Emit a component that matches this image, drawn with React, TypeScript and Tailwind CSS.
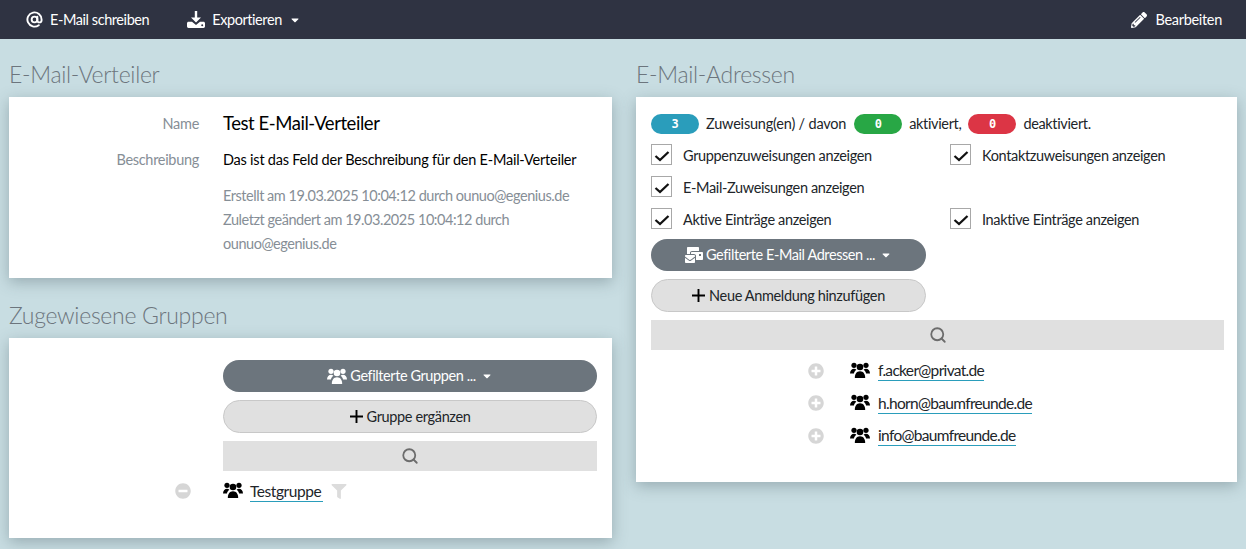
import React from 'react';
import { AtSign, Search } from 'lucide-react';
import { FaPencilAlt, FaFilter, FaPlusCircle, FaMinusCircle, FaMailBulk, FaCaretDown } from 'react-icons/fa';

const font = "font-['Lato','Liberation_Sans',sans-serif]";

const UsersIcon = ({ className }: { className: string }) => (
  <svg viewBox="0 0 20 16" className={className} fill="currentColor">
    <circle cx="4" cy="3.3" r="2.6" />
    <circle cx="16" cy="3.3" r="2.6" />
    <circle cx="10" cy="5" r="3.3" />
    <path d="M0 11.5C0 8.5 2 6.8 4 6.8c1 0 1.8.3 2.4.9C5 8.8 4.2 10 3.9 11.5Z" />
    <path d="M20 11.5C20 8.5 18 6.8 16 6.8c-1 0-1.8.3-2.4.9 1.4 1.1 2.2 2.3 2.5 3.8Z" />
    <path d="M4.8 16c0-4 1.7-6.8 5.2-6.8s5.2 2.8 5.2 6.8Z" />
  </svg>
);

const DownloadIcon = () => (
  <svg viewBox="0 0 18 17" className="h-[17px] w-[18px]" fill="currentColor">
    <path d="M7.8 0h2.4v6.5H14L9 11.6 4 6.5h3.8Z" />
    <path fillRule="evenodd" d="M1.5 10.8H5L9 14l4-3.2h3.5c.8 0 1.5.7 1.5 1.5v3c0 .9-.7 1.7-1.5 1.7h-15C.7 17 0 16.2 0 15.3v-3c0-.8.7-1.5 1.5-1.5Zm13.7 2.4a1 1 0 1 0 0 2 1 1 0 0 0 0-2Z" />
  </svg>
);

const PlusIcon = () => (
  <svg viewBox="0 0 13 13" className="h-[13px] w-[13px]" fill="none" stroke="#000" strokeWidth="1.9">
    <path d="M6.5 0v13M0 6.5h13" />
  </svg>
);

const Heading = ({ children }: { children: React.ReactNode }) => (
  <h2 className="h-[44px] text-[23px] leading-[42px] font-light tracking-[-0.3px] text-[#6c757d]">{children}</h2>
);

const Card = ({ className, children }: { className: string; children: React.ReactNode }) => (
  <div className={`bg-white shadow-[0_4px_14px_rgba(60,80,90,0.35)] ${className}`}>{children}</div>
);

const Check = ({ label, className = '' }: { label: string; className?: string }) => (
  <label className={`flex h-[21px] items-center gap-[11px] text-[14.5px] tracking-[-0.35px] text-[#212529] ${className}`}>
    <span className="flex h-[21px] w-[21px] shrink-0 items-center justify-center border border-[#a8a8a8] bg-white">
      <svg viewBox="0 0 16 16" className="h-[16px] w-[16px]" fill="none" stroke="#111" strokeWidth="2.3">
        <path d="M1.5 9 L6 13 L14.5 5" />
      </svg>
    </span>
    <span className="translate-y-[1px]">{label}</span>
  </label>
);

const Badge = ({ color, value }: { color: string; value: string }) => (
  <span className={`flex h-[20px] w-[48px] items-center justify-center rounded-full font-['DejaVu_Sans_Mono',monospace] text-[12px] font-bold text-white ${color}`}>
    {value}
  </span>
);

const DarkButton = ({ icon, label }: { icon: React.ReactNode; label: string }) => (
  <button className="flex h-[32px] w-full items-center justify-center gap-[3px] rounded-full bg-[#6c757d] text-[14.5px] tracking-[-0.42px] text-white">
    {icon}
    <span>{label}</span>
    <FaCaretDown className="ml-[2px] h-[12px] w-[12px]" />
  </button>
);

const LightButton = ({ label }: { label: string }) => (
  <button className="flex h-[33px] w-full items-center justify-center gap-[4px] rounded-full border border-[#c8c8c8] bg-[#e0e0e0] text-[14.5px] tracking-[-0.35px] text-[#212529]">
    <PlusIcon />
    <span>{label}</span>
  </button>
);

const SearchBar = () => (
  <div className="flex h-[30px] items-center justify-center bg-[#e0e0e0]">
    <Search size={18} strokeWidth={2.4} className="text-[#6c6c6c]" />
  </div>
);

const Address = ({ mail }: { mail: string }) => (
  <div className="flex h-[32.5px] items-center">
    <FaPlusCircle className="ml-[157px] h-[16px] w-[16px] text-[#d6d6d6]" />
    <UsersIcon className="ml-[26px] h-[16px] w-[20px] -translate-y-[1px] text-black" />
    <a className="ml-[8px] border-b border-[#2a9dbb] text-[15.5px] leading-[20px] tracking-[-0.68px] text-[#212529]">{mail}</a>
  </div>
);

export default function App() {
  return (
    <div className={`h-[549px] w-[1246px] overflow-hidden bg-[#c8dde2] ${font}`}>
      <nav className="flex h-[39px] items-center bg-[#2f3342] text-[14.5px] tracking-[-0.43px] text-white">
        <a className="ml-[26px] flex items-center gap-[7px]">
          <AtSign size={17} strokeWidth={2.7} />
          E-Mail schreiben
        </a>
        <a className="ml-[38px] flex items-center gap-[7px]">
          <DownloadIcon />
          Exportieren
          <FaCaretDown className="h-[12px] w-[12px]" />
        </a>
        <a className="mr-[24px] ml-auto flex items-center gap-[8px] tracking-[-0.3px]">
          <FaPencilAlt className="h-[16px] w-[16px]" />
          Bearbeiten
        </a>
      </nav>

      <main className="flex gap-[24px] pt-[14px] pl-[9px]">
        <section className="w-[603px]">
          <Heading>E-Mail-Verteiler</Heading>
          <Card className="h-[181px] pt-[14px]">
            <div className="flex h-[26px] items-center">
              <span className="w-[190px] text-right text-[14.5px] tracking-[-0.3px] text-[#868e96]">Name</span>
              <span className="ml-[24px] text-[18.5px] tracking-[-0.45px] text-black">Test E-Mail-Verteiler</span>
            </div>
            <div className="mt-[10px] flex h-[26px] items-center">
              <span className="w-[190px] text-right text-[14.5px] tracking-[-0.3px] text-[#868e96]">Beschreibung</span>
              <span className="ml-[24px] text-[14.5px] tracking-[-0.23px] text-black">Das ist das Feld der Beschreibung für den E-Mail-Verteiler</span>
            </div>
            <div className="mt-[11px] ml-[214px] w-[360px] text-[14.5px] leading-[24px] tracking-[-0.46px] text-[#868e96]">
              Erstellt am 19.03.2025 10:04:12 durch ounuo@egenius.de
              <br />
              Zuletzt geändert am 19.03.2025 10:04:12 durch
              <br />
              ounuo@egenius.de
            </div>
          </Card>

          <div className="mt-[16px]">
            <Heading>Zugewiesene Gruppen</Heading>
          </div>
          <Card className="h-[200px] pt-[22px]">
            <div className="ml-[214px] flex w-[374px] flex-col">
              <DarkButton icon={<UsersIcon className="h-[16px] w-[20px]" />} label="Gefilterte Gruppen ..." />
              <div className="mt-[8px]">
                <LightButton label="Gruppe ergänzen" />
              </div>
              <div className="mt-[8px]">
                <SearchBar />
              </div>
            </div>
            <div className="mt-[8px] flex h-[24px] items-center">
              <FaMinusCircle className="ml-[166px] h-[16px] w-[16px] text-[#d6d6d6]" />
              <UsersIcon className="ml-[32px] h-[16px] w-[20px] -translate-y-[1px] text-black" />
              <a className="ml-[7px] w-[73px] border-b border-[#2a9dbb] text-[15.5px] leading-[20px] tracking-[-0.45px] text-[#212529]">Testgruppe</a>
              <FaFilter className="ml-[8px] h-[15px] w-[16px] text-[#dcdcdc]" />
            </div>
          </Card>
        </section>

        <section className="w-[601px]">
          <Heading>E-Mail-Adressen</Heading>
          <Card className="h-[385px] pt-[17px] pr-[13px] pl-[15px]">
            <div className="flex h-[20px] items-center text-[14.5px] tracking-[-0.2px] text-[#212529]">
              <Badge color="bg-[#2a9dbb]" value="3" />
              <span className="ml-[7px]">Zuweisung(en) / davon</span>
              <span className="ml-[8px]"><Badge color="bg-[#28a745]" value="0" /></span>
              <span className="ml-[7px] tracking-[-0.35px]">aktiviert,</span>
              <span className="ml-[7px]"><Badge color="bg-[#dc3545]" value="0" /></span>
              <span className="ml-[7px] tracking-[-0.35px]">deaktiviert.</span>
            </div>
            <div className="mt-[10px] grid grid-cols-[299px_1fr] gap-y-[11px]">
              <Check label="Gruppenzuweisungen anzeigen" />
              <Check label="Kontaktzuweisungen anzeigen" />
              <Check label="E-Mail-Zuweisungen anzeigen" className="col-span-2" />
              <Check label="Aktive Einträge anzeigen" />
              <Check label="Inaktive Einträge anzeigen" />
            </div>
            <div className="mt-[10px] w-[275px]">
              <DarkButton icon={<FaMailBulk className="h-[16px] w-[18px]" />} label="Gefilterte E-Mail Adressen ..." />
              <div className="mt-[8px]">
                <LightButton label="Neue Anmeldung hinzufügen" />
              </div>
            </div>
            <div className="mt-[8px]">
              <SearchBar />
            </div>
            <div className="mt-[4.5px]">
              <Address mail="f.acker@privat.de" />
              <Address mail="h.horn@baumfreunde.de" />
              <Address mail="info@baumfreunde.de" />
            </div>
          </Card>
        </section>
      </main>
    </div>
  );
}
